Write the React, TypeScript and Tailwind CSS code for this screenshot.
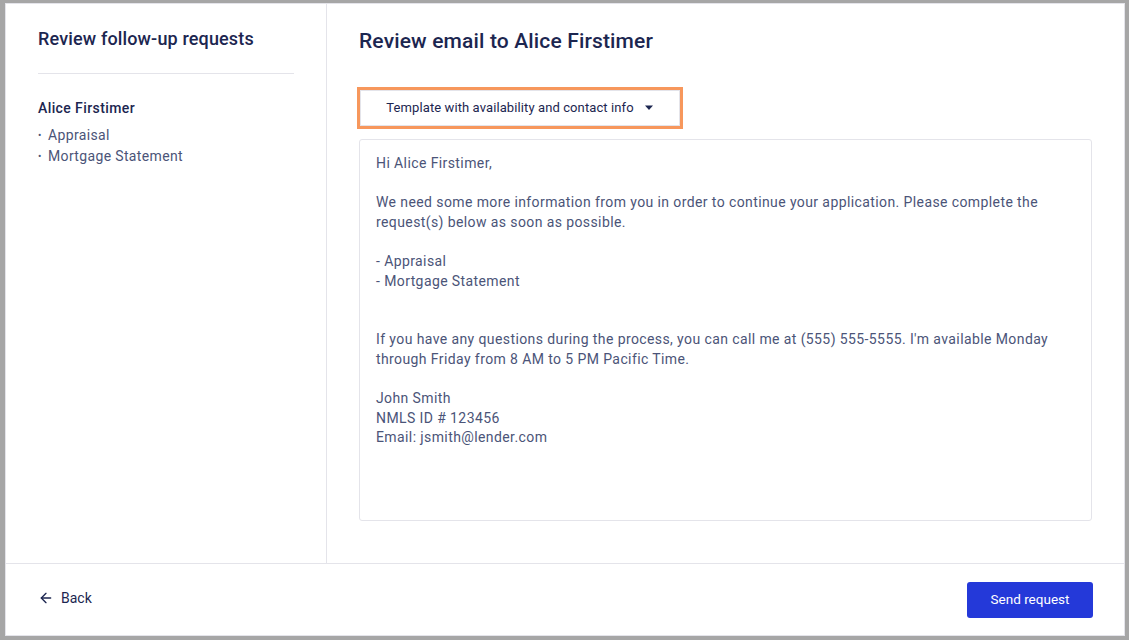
import { ArrowLeft } from 'lucide-react';

const items = ['Appraisal', 'Mortgage Statement'];

export default function App() {
  return (
    <div
      className="w-[1129px] h-[640px] bg-[#a6a6a6] pl-[5px] pt-[3px] pr-[4px] pb-[4px]"
      style={{ fontFamily: 'Roboto, "Noto Sans", sans-serif' }}
    >
      <div className="h-full bg-white border border-[#e4e4ea] flex flex-col">
        <div className="flex flex-1 min-h-0">
          {/* sidebar */}
          <aside className="w-[321px] border-r border-[#e4e4ea] pl-[32px] pr-[32px] pt-[23px]">
            <h2 className="text-[18px] leading-[24px] font-medium text-[#1c2650] tracking-[0.15px]">
              Review follow-up requests
            </h2>
            <div className="mt-[22px] border-t border-[#e4e4ea]" />
            <div className="mt-[24px] text-[14px] leading-[20px] font-medium text-[#1c2650] tracking-[0.4px]">
              Alice Firstimer
            </div>
            <ul className="mt-[7px] text-[14px] leading-[21px] text-[#4b5478] tracking-[0.35px]">
              {items.map((it) => (
                <li key={it} className="flex items-center">
                  <span className="w-[10px] text-[10px]">•</span>
                  {it}
                </li>
              ))}
            </ul>
          </aside>

          {/* main */}
          <main className="flex-1 pl-[32px] pr-[32px] pt-[23px] pb-[42px] flex flex-col">
            <h1 className="text-[21px] leading-[28px] font-medium text-[#1c2650] tracking-[0.15px]">
              Review email to Alice Firstimer
            </h1>
            <div className="mt-[32px] ml-[-2px] w-[326px] h-[42px] border-[3px] border-[#f7975c]">
              <button className="w-full h-full bg-white border border-[#e4e4ea] flex items-center justify-center gap-[8px] text-[13px] text-[#1c2650] tracking-[0.1px]">
                Template with availability and contact info
                <svg width="10" height="6" viewBox="0 0 10 6" className="ml-[2px]">
                  <path d="M1 0.5h8L5 5z" fill="#1c2650" />
                </svg>
              </button>
            </div>
            <div className="mt-[10px] flex-1 border border-[#e4e4ea] rounded-[3px] pl-[16px] pr-[16px] pt-[14px] text-[14px] leading-[19.6px] text-[#4b5478] tracking-[0.4px]">
              <p>Hi Alice Firstimer,</p>
              <br />
              <p>
                We need some more information from you in order to continue your application. Please complete the
                request(s) below as soon as possible.
              </p>
              <br />
              <p>- Appraisal</p>
              <p>- Mortgage Statement</p>
              <br />
              <br />
              <p>
                If you have any questions during the process, you can call me at (555) 555-5555. I'm available Monday
                through Friday from 8 AM to 5 PM Pacific Time.
              </p>
              <br />
              <p>John Smith</p>
              <p>NMLS ID # 123456</p>
              <p>Email: jsmith@lender.com</p>
            </div>
          </main>
        </div>

        {/* footer */}
        <footer className="h-[72px] border-t border-[#e4e4ea] flex items-center justify-between pl-[32px] pr-[31px]">
          <button className="flex items-center gap-[7px] text-[14px] text-[#1c2650] mt-[-3px]">
            <ArrowLeft size={16} strokeWidth={2} />
            Back
          </button>
          <button className="w-[126px] h-[36px] rounded-[3px] bg-[#2439d9] text-white text-[13.5px]">
            Send request
          </button>
        </footer>
      </div>
    </div>
  );
}
